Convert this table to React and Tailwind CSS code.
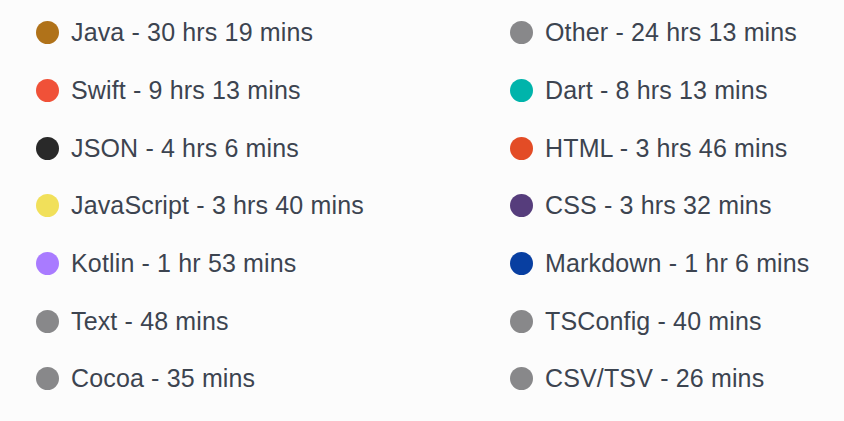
import React from 'react';

const left = [
  { name: 'Java', time: '30 hrs 19 mins', color: 'bg-[#b07219]' },
  { name: 'Swift', time: '9 hrs 13 mins', color: 'bg-[#f05138]' },
  { name: 'JSON', time: '4 hrs 6 mins', color: 'bg-[#292929]' },
  { name: 'JavaScript', time: '3 hrs 40 mins', color: 'bg-[#f1e05a]' },
  { name: 'Kotlin', time: '1 hr 53 mins', color: 'bg-[#a97bff]' },
  { name: 'Text', time: '48 mins', color: 'bg-[#88888a]' },
  { name: 'Cocoa', time: '35 mins', color: 'bg-[#88888a]' },
];

const right = [
  { name: 'Other', time: '24 hrs 13 mins', color: 'bg-[#88888a]' },
  { name: 'Dart', time: '8 hrs 13 mins', color: 'bg-[#00b4ab]' },
  { name: 'HTML', time: '3 hrs 46 mins', color: 'bg-[#e34c26]' },
  { name: 'CSS', time: '3 hrs 32 mins', color: 'bg-[#563d7c]' },
  { name: 'Markdown', time: '1 hr 6 mins', color: 'bg-[#083fa1]' },
  { name: 'TSConfig', time: '40 mins', color: 'bg-[#88888a]' },
  { name: 'CSV/TSV', time: '26 mins', color: 'bg-[#88888a]' },
];

function LegendItem({ name, time, color }) {
  return (
    <li className="flex items-center h-[57.7px]">
      <span className={`w-[23px] h-[23px] rounded-full shrink-0 ${color}`} />
      <span className="ml-[12px] text-[25px] tracking-[0.15px] leading-none text-[#3c4450]">
        {name} - {time}
      </span>
    </li>
  );
}

export default function App() {
  return (
    <div className="w-[844px] h-[421px] bg-[#fcfcfc] pl-[36px] pt-[4px] font-['Liberation_Sans',Arial,sans-serif] overflow-hidden">
      <div className="flex">
        <ul className="w-[474px]">
          {left.map((l) => (
            <LegendItem key={l.name} {...l} />
          ))}
        </ul>
        <ul>
          {right.map((l) => (
            <LegendItem key={l.name} {...l} />
          ))}
        </ul>
      </div>
    </div>
  );
}
